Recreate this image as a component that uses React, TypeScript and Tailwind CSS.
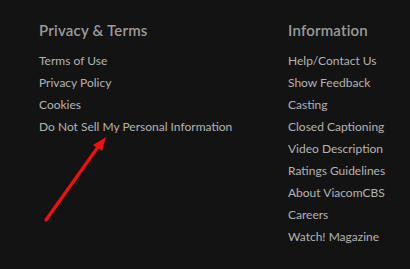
export default function App() {
  const left = ["Terms of Use", "Privacy Policy", "Cookies", "Do Not Sell My Personal Information"];
  const right = [
    "Help/Contact Us",
    "Show Feedback",
    "Casting",
    "Closed Captioning",
    "Video Description",
    "Ratings Guidelines",
    "About ViacomCBS",
    "Careers",
    "Watch! Magazine",
  ];
  return (
    <div className="relative w-[410px] h-[269px] bg-[#131313] overflow-hidden" style={{ fontFamily: "Lato, 'Liberation Sans', sans-serif" }}>
      <div className="flex pt-[21px] pl-[39px]">
        <div className="w-[249px]">
          <h3 className="text-[15px] leading-[18px] font-semibold text-[#9b9b9b] tracking-[0.2px]">Privacy &amp; Terms</h3>
          <ul className="mt-[11px] flex flex-col">
            {left.map((t) => (
              <li key={t} className="text-[12px] leading-[22px] text-[#b3b3b3]">{t}</li>
            ))}
          </ul>
        </div>
        <div>
          <h3 className="text-[15px] leading-[18px] font-semibold text-[#9b9b9b] tracking-[0.2px]">Information</h3>
          <ul className="mt-[11px] flex flex-col">
            {right.map((t) => (
              <li key={t} className="text-[12px] leading-[22px] text-[#b3b3b3]">{t}</li>
            ))}
          </ul>
        </div>
      </div>
      <svg className="absolute left-0 top-0" width="410" height="269" viewBox="0 0 410 269">
        <line x1="46" y1="220" x2="98" y2="147" stroke="#ee1111" strokeWidth="3.2" strokeLinecap="round" />
        <polygon points="106,137 93,145 102,151" fill="#ee1111" />
      </svg>
    </div>
  );
}
